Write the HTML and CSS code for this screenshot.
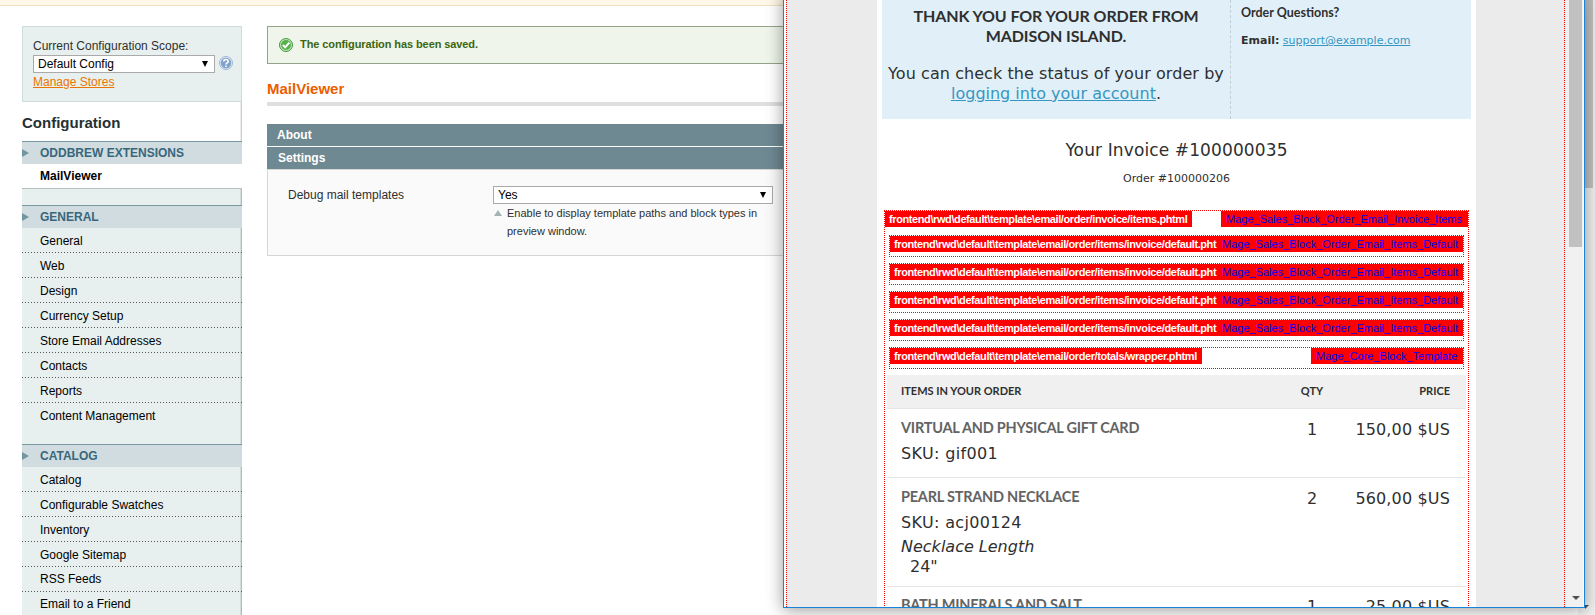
FILE: index.html
```html
<!DOCTYPE html>
<html lang="en">
<head>
<meta charset="utf-8">
<title>Configuration - MailViewer</title>
<link rel="stylesheet" href="styles.css">
</head>
<body>
<div class="notice"></div>
<div class="page">
  <aside class="side">
    <div class="scope">
      <label>Current Configuration Scope:</label>
      <div class="scope-row">
        <div class="select scope-select"><span>Default Config</span><i class="arrow"></i></div>
        <svg class="help" width="14" height="14" viewBox="0 0 14 14"><circle cx="7" cy="7" r="6.5" fill="#dbe6f1" stroke="#a3b8d2"/><circle cx="7" cy="7" r="5.2" fill="#7fa3cc"/><path d="M4.8 5.5C4.8 2.8 9.2 2.8 9.2 5.4C9.2 7 7 6.9 7 8.4M7 9.4V10.9" fill="none" stroke="#fff" stroke-width="1.6"/></svg>
      </div>
      <a class="manage">Manage Stores</a>
    </div>
    <h3 class="side-title">Configuration</h3>
    <div class="group"><i class="tri"></i>ODDBREW EXTENSIONS</div>
    <div class="active">MailViewer</div>
    <div class="gap-sm"></div>
    <div class="group"><i class="tri"></i>GENERAL</div>
    <ul class="menu">
      <li>General</li><li>Web</li><li>Design</li><li>Currency Setup</li><li>Store Email Addresses</li><li>Contacts</li><li>Reports</li><li class="last">Content Management</li>
    </ul>
    <div class="group"><i class="tri"></i>CATALOG</div>
    <ul class="menu">
      <li>Catalog</li><li>Configurable Swatches</li><li>Inventory</li><li>Google Sitemap</li><li class="up">RSS Feeds</li><li class="up">Email to a Friend</li>
    </ul>
  </aside>
  <main class="main">
    <div class="success">
      <svg width="14" height="14" viewBox="0 0 14 14"><circle cx="7" cy="7" r="6.5" fill="#c4e3b8" stroke="#3e9a3c"/><circle cx="7" cy="7" r="5" fill="#56b04c"/><path d="M3.8 7.1L6.2 9.3L10.3 4.6" fill="none" stroke="#fff" stroke-width="2"/></svg>
      <span>The configuration has been saved.</span>
    </div>
    <h1 class="title">MailViewer</h1>
    <div class="bar">About</div>
    <div class="bar second">Settings</div>
    <div class="fieldset">
      <div class="field-label">Debug mail templates</div>
      <div class="field">
        <div class="select"><span>Yes</span><i class="arrow"></i></div>
        <p class="note"><i class="up-tri"></i><span>Enable to display template paths and block types in<br>preview window.</span></p>
      </div>
    </div>
  </main>
</div>
<div class="page-scroll"><div class="page-thumb"></div></div>
<div class="window">
  <div class="viewport">
    <div class="mail">
      <div class="intro">
        <div class="thanks">
          <h2>THANK YOU FOR YOUR ORDER FROM<br>MADISON ISLAND.</h2>
          <p><span class="check">You can check the status of your order by</span><br><a>logging into your account</a>.</p>
        </div>
        <div class="questions">
          <h4>Order Questions?</h4>
          <p><b>Email:</b> <a>support@example.com</a></p>
        </div>
      </div>
      <div class="invoice">Your Invoice #100000035</div>
      <div class="order">Order #100000206</div>
      <div class="hints">
        <div class="hint outer"><b class="path">frontend\rwd\default\template\email/order/invoice/items.phtml</b><b class="block">Mage_Sales_Block_Order_Email_Invoice_Items</b></div>
        <div class="hint inner"><b class="path cut">frontend\rwd\default\template\email/order/items/invoice/default.pht</b><b class="block flush">Mage_Sales_Block_Order_Email_Items_Default</b></div>
        <div class="hint inner"><b class="path cut">frontend\rwd\default\template\email/order/items/invoice/default.pht</b><b class="block flush">Mage_Sales_Block_Order_Email_Items_Default</b></div>
        <div class="hint inner"><b class="path cut">frontend\rwd\default\template\email/order/items/invoice/default.pht</b><b class="block flush">Mage_Sales_Block_Order_Email_Items_Default</b></div>
        <div class="hint inner"><b class="path cut">frontend\rwd\default\template\email/order/items/invoice/default.pht</b><b class="block flush">Mage_Sales_Block_Order_Email_Items_Default</b></div>
        <div class="hint inner"><b class="path">frontend\rwd\default\template\email/order/totals/wrapper.phtml</b><b class="block core">Mage_Core_Block_Template</b></div>
        <div class="items">
          <div class="row head"><div>ITEMS IN YOUR ORDER</div><div class="qty">QTY</div><div class="price">PRICE</div></div>
          <div class="row r1"><div><h5>VIRTUAL AND PHYSICAL GIFT CARD</h5><p class="sku">SKU: gif001</p></div><div class="qty">1</div><div class="price">150,00 $US</div></div>
          <div class="row r2"><div><h5>PEARL STRAND NECKLACE</h5><p class="sku">SKU: acj00124</p><p class="opt"><i>Necklace Length</i></p><p class="val">24"</p></div><div class="qty">2</div><div class="price">560,00 $US</div></div>
          <div class="row r3"><div><h5>BATH MINERALS AND SALT</h5></div><div class="qty">1</div><div class="price">25,00 $US</div></div>
        </div>
      </div>
    </div>
  </div>
  <div class="scroll"><div class="thumb"></div><i class="down"></i></div>
</div>
<i class="corner"></i>
</body>
</html>
```
FILE: styles.css
```css
* { box-sizing: border-box; }
html, body { margin: 0; height: 615px; overflow: hidden; }
body { position: relative; background: #fff; color: #2f2f2f; font: 12px/16px "Liberation Sans", Arial, sans-serif; }
h1, h2, h3, h4, h5, p, ul { margin: 0; padding: 0; }
span, b, a, h2, h5 { white-space: nowrap; }
.notice { height: 6px; background: #fff8e9; border-bottom: 1px solid #eee2be; }
.page { display: flex; gap: 25px; padding: 20px 0 0 22px; }

/* sidebar */
.side { width: 220px; height: 589px; flex: none; background: #e7efef; overflow: hidden; box-shadow: inset -1px 0 #aebcbc, inset -2px 0 #d3dddd; }
.scope { height: 76px; padding: 11px 7px 0 10px; background: #e7efef; border: 1px solid #ccdcdc; }
.scope label { display: block; height: 17px; line-height: 17px; }
.scope-row { display: flex; gap: 4px; height: 18px; }
.select { display: flex; justify-content: space-between; align-items: center; height: 18px; padding: 0 6px 0 4px; background: #fff; border: 1px solid #aaa; color: #000; }
.scope-select { width: 182px; }
.help { margin-top: 1px; }
.arrow { border: 3px solid transparent; border-top: 6px solid #000; border-bottom: 0; }
.manage { display: block; line-height: 17px; margin-top: 1px; color: #ea7601; text-decoration: underline; }
.side-title { height: 39px; padding-top: 12px; background: #fff; font-size: 15px; line-height: 18px; color: #253033; box-shadow: inset -1px 0 #ccc, inset -2px 0 #eee; }
.group { display: flex; align-items: center; height: 23px; background: #d0dcdf; border-top: 1px solid #7a9aa3; color: #38677c; font-weight: bold; line-height: 22px; }
.tri { width: 0; margin-right: 11px; border: 4px solid transparent; border-left: 7px solid #7296a0; border-right: 0; }
.active { height: 24px; padding-left: 18px; line-height: 24px; background: #fff; color: #000; font-weight: bold; }
.gap-sm { height: 17px; border-top: 1px solid #b4c3c1; }
.menu { list-style: none; color: #000; }
.menu li { height: 25px; padding: 1px 0 0 18px; line-height: 24px; background: repeating-linear-gradient(90deg, #555 0 1px, transparent 1px 3px) 0 100% / 100% 1px no-repeat; }
.menu .last { height: 41px; background: none; }
.menu .up { padding-top: 0; }

/* configuration form */
.main { flex: 1; min-width: 0; }
.success { display: flex; align-items: center; gap: 7px; height: 38px; padding: 0 0 0 11px; background: #eff5ea; border: 1px solid #95a486; color: #3d6611; font-size: 11px; font-weight: bold; letter-spacing: -.09px; }
.success span { padding-bottom: 2px; }
.title { height: 42px; margin-bottom: 18px; padding-top: 16px; border-bottom: 4px solid #dfdfdf; color: #eb5e00; font-size: 15px; line-height: 18px; }
.bar { height: 22px; padding-left: 10px; background: #6f8992; color: #fff; font-weight: bold; line-height: 22px; }
.second { margin-top: 1px; padding-left: 11px; }
.fieldset { display: flex; height: 87px; padding: 16px 0 0 20px; background: #fafafa; border: 1px solid #d6d6d6; }
.field-label { width: 205px; line-height: 19px; }
.field { width: 280px; }
.note { display: flex; gap: 5px; font-size: 11px; line-height: 18px; padding-left: 1px; }
.up-tri { height: 0; margin-top: 6px; border: 4px solid transparent; border-bottom: 6px solid #a3b3b3; border-top: 0; }

/* browser chrome behind the preview */
.page-scroll { position: absolute; top: 0; right: 0; width: 17px; height: 615px; padding: 0 2px; background: #f1f1f1; }
.page-thumb { height: 188px; background: #c1c1c1; }
.corner { position: absolute; left: 1585px; top: 605px; border: 4px solid transparent; border-top: 4px solid #444; border-left-width: 0; border-bottom: 0; }

/* preview window */
.window { position: absolute; left: 783px; top: -10px; width: 802px; height: 618px; padding: 10px 1px 0 2px; display: flex; background: #fff; border: 1px solid #1883d7; border-top: 0; box-shadow: 0 2px 16px rgba(0,0,0,.4); }
.viewport { width: 779px; flex: none; height: 607px; padding-left: 90px; overflow: hidden; background: #ebebeb; border: 1px dotted red; border-width: 0 1px; }
.mail { width: 599px; height: 607px; padding: 0 5px; background: #fff; color: #2f2f2f; font: 16px/20px "DejaVu Sans", Verdana, sans-serif; overflow: hidden; }
.scroll { width: 18px; height: 607px; padding: 0 1px 0 4px; background: #f1f1f1; display: flex; flex-direction: column; justify-content: space-between; }
.thumb { height: 247px; background: #c1c1c1; }
.down { width: 0; margin: 0 0 7px 3px; border: 4px solid transparent; border-top: 4px solid #505050; border-bottom: 0; }
.intro { display: flex; height: 119px; background: #e1f0f8; }
.thanks { width: 349px; border-right: 1px dashed #c3ced4; text-align: center; }
h2, h4, h5, .head { font-family: Lato, sans-serif; font-weight: 700; }
h2 { padding-top: 6px; font-size: 16px; line-height: 20px; letter-spacing: -.1px; }
.thanks p { margin-top: 18px; }
.check { letter-spacing: .07px; }
.intro a { color: #3696c2; text-decoration: underline; }
.questions { padding-left: 10px; font-size: 11px; }
h4 { padding-top: 3px; font-size: 12.5px; line-height: 20px; }
.questions p { margin-top: 8px; }
.invoice { padding-top: 20px; height: 50px; text-align: center; font-size: 17px; line-height: 22px; letter-spacing: .12px; }
.order { height: 41px; text-align: center; font-size: 11px; line-height: 20px; }
.hints { width: 585px; margin-left: 2px; height: 420px; border: 1px dotted red; border-bottom: 0; }
.hint { display: flex; justify-content: space-between; font: bold 11px/16px "Liberation Sans", Arial, sans-serif; }
.hint b { height: 16px; background: red; }
.outer { height: 24px; }
.inner { height: 22px; margin: 0 4px 6px; border: 1px dotted red; }
.hint .path { width: 307px; padding-left: 4px; color: #fff; letter-spacing: -.4px; }
.inner .path { width: 312px; }
.inner .cut { width: 331px; }
.block { width: 247px; padding-left: 5px; color: #00f; font-weight: normal; }
.inner .flush { width: 242px; padding-left: 1px; }
.inner .core { width: 152px; }
.items { width: 579px; margin-left: 2px; }
.row { display: grid; grid-template-columns: 386px 50px 1fr; padding: 0 16px 0 14px; border-bottom: 1px solid #e5e5e5; }
.qty { text-align: center; }
.price { text-align: right; letter-spacing: .15px; }
.head { height: 34px; background: #f0f0f0; font-size: 11px; line-height: 32px; }
.head .price { letter-spacing: 0; }
.r1 { height: 69px; padding-top: 11px; }
.r2 { height: 109px; padding-top: 11px; }
.r3 { height: 60px; padding-top: 10px; }
h5 { margin-top: -1px; font-size: 14.5px; line-height: 17px; letter-spacing: -.23px; color: #636363; }
.sku { margin-top: 8px; letter-spacing: .35px; }
.opt { margin-top: 4px; }
.val { padding-left: 9px; }
```
